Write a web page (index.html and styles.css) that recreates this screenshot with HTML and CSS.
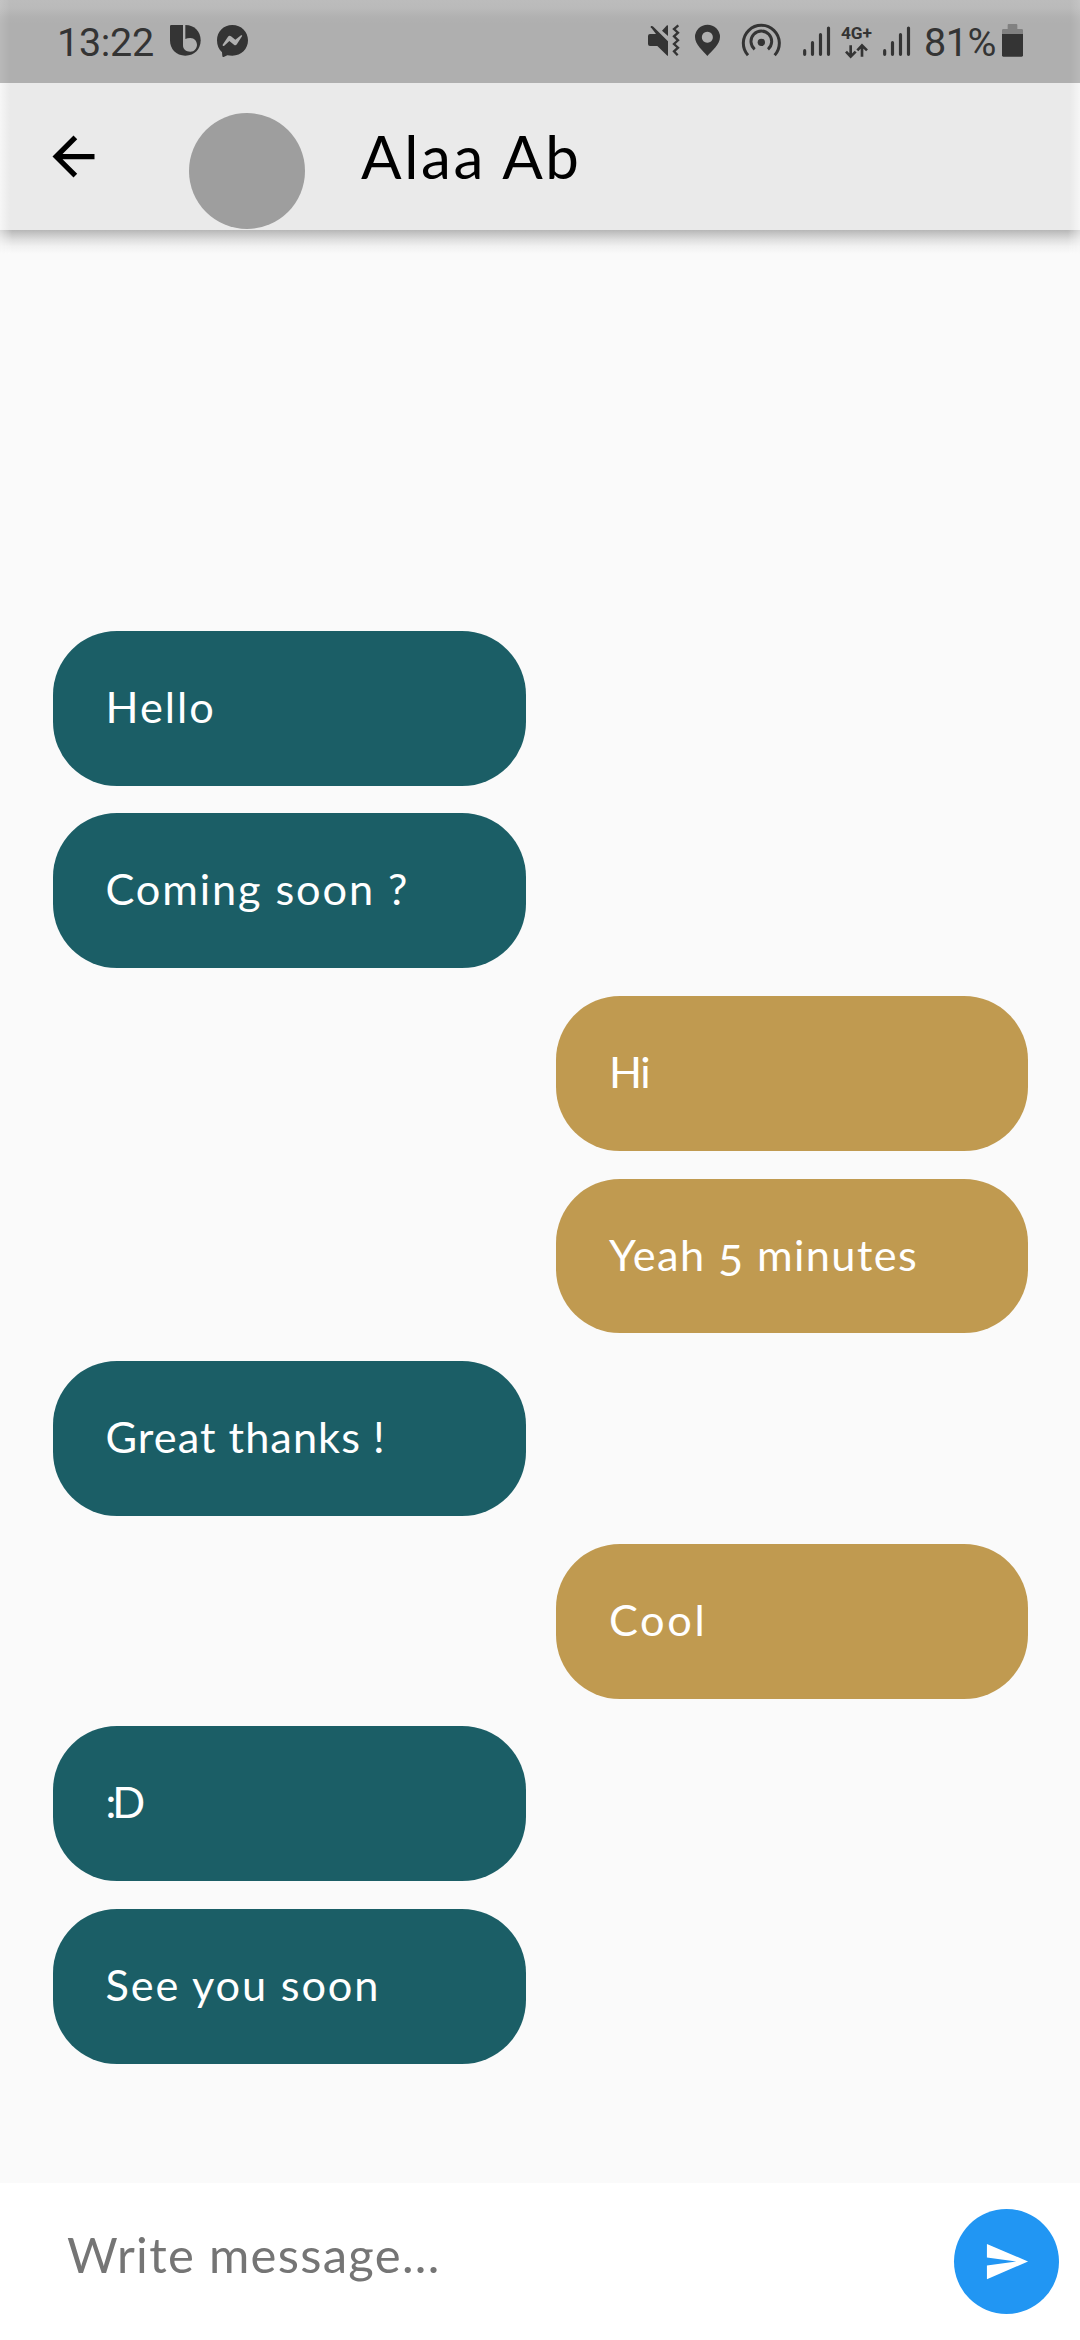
FILE: index.html
```html
<!DOCTYPE html>
<html lang="en">
<head>
<meta charset="utf-8">
<title>Alaa Ab</title>
<link rel="stylesheet" href="styles.css">
</head>
<body>
<div class="screen">
  <div class="top">
    <div class="status">
      <span class="clock">13:22</span>
      <svg class="icon bixby" viewBox="507 0 99 249"><path d="M514 75H556C584 75 602 95 602 121S584 167 556 167 510 147 510 121V79Q510 75 514 75Z"/><path class="cut" d="M549 75H556V117Q562 114 571 114C583 114 591 124 591 134S583 155 571 155C558 155 549 148 549 136Z"/></svg>
      <svg class="icon messenger" viewBox="648 0 99 249"><path d="M697 75C724 75 744 95 744 121S724 167 697 167Q688 167 682 166L671 171Q667 172 667 168L666 157C656 148 651 136 651 121 651 95 670 75 697 75Z"/><path class="cut" d="M668 134L684 110Q688 105 693 109L706 119 723 106Q728 104 726 109L711 132Q707 138 702 134L688 123 672 138Q667 139 668 134Z"/></svg>
      <svg class="icon mute" viewBox="84 0 96 249"><path d="M90 102H108L95 85Q89 81 94 78 97 77 100 80L144 124V167H142L112 138H90Q84 138 84 132V108Q84 102 90 102ZM126 92L141 76Q144 75 144 78V108Z"/><path class="line" d="M175 76L162 87 174 98 162 109 174 121 162 132 174 143 162 154 173 166"/></svg>
      <svg class="icon pin" viewBox="222 0 81 249"><path fill-rule="evenodd" d="M262 168C250 153 225 134 225 111A37.500 37 0 0 1 300 111C300 134 275 153 262 168ZM262 95A16.500 16.500 0 1 0 262.100 95Z"/></svg>
      <svg class="icon hotspot" viewBox="363 0 123 249"><circle cx="424" cy="127" r="11"/><path class="ring" d="M404 148A31 31 0 1 1 444 148M384 166A54 54 0 1 1 464 166"/></svg>
      <svg class="icon bars" viewBox="546 0 87 249"><path class="bar" d="M554 152V163M577.500 128V163M601.500 104V163M625.500 84V163"/></svg>
      <svg class="icon net" viewBox="0 0 99 249"><text class="net-text" x="3" y="118" textLength="93">4G+</text><path class="arrow" d="M32 136V170M18 155L32 170 47 155M66 170V136M52 151L66 136 81 151"/></svg>
      <svg class="icon bars2" viewBox="546 0 87 249"><path class="bar" d="M554 152V163M577.500 128V163M601.500 104V163M625.500 84V163"/></svg>
      <span class="percent">81%</span>
      <svg class="icon" viewBox="483 0 69 249"><path class="empty" d="M503 75Q503 72 506 72H529Q532 72 532 75V87H545Q549 87 549 91V102H486V91Q486 87 490 87H503Z"/><path d="M486 102H549V166Q549 170 545 170H490Q486 170 486 166Z"/></svg>
    </div>
    <header class="header">
      <svg class="back" viewBox="0 0 24 24"><path d="M20 11H7.830l5.590-5.590L12 4l-8 8 8 8 1.410-1.410L7.830 13H20z"/></svg>
      <div class="avatar"></div>
      <h1 class="name">Alaa Ab</h1>
    </header>
  </div>
  <main class="chat">
    <div class="bubble in hello">Hello</div>
    <div class="bubble in coming">Coming soon ?</div>
    <div class="bubble out hi">Hi</div>
    <div class="bubble out yeah">Yeah <span class="oldstyle">5</span> minutes</div>
    <div class="bubble in great">Great thanks !</div>
    <div class="bubble out cool">Cool</div>
    <div class="bubble in smile">:D</div>
    <div class="bubble in see">See you soon</div>
  </main>
  <footer class="composer">
    <span class="placeholder">Write message...</span>
    <div class="send"><svg viewBox="0 0 24 24"><path d="M2.010 21L23 12 2.010 3 2 10l15 2-15 2z"/></svg></div>
  </footer>
</div>
</body>
</html>
```
FILE: styles.css
```css
* { box-sizing: border-box; }
body { margin: 0; background: #fafafa; font-family: Lato, "Open Sans", sans-serif; }
.screen { width: 1080px; height: 2340px; display: flex; flex-direction: column; overflow: hidden; }

.top { position: relative; height: 230px; flex: none; background: #eaeaea; }
.top::before {
  content: ""; position: absolute; inset: 0; pointer-events: none;
  background:
    linear-gradient(to right, rgba(255,255,255,.6), rgba(255,255,255,0) 10px) 0 83px / 100% 147px no-repeat,
    linear-gradient(to left, rgba(255,255,255,.6), rgba(255,255,255,0) 10px) 0 83px / 100% 147px no-repeat;
}
.top::after {
  content: ""; position: absolute; left: 0; right: 0; top: 230px; height: 24px;
  background: linear-gradient(#b6b6b6, #c6c6c6 15%, #dedede 40%, #f1f1f1 68%, #fafafa);
  -webkit-mask-image: linear-gradient(to right, rgba(0,0,0,.45), #000 12px, #000 1068px, rgba(0,0,0,.45));
  mask-image: linear-gradient(to right, rgba(0,0,0,.45), #000 12px, #000 1068px, rgba(0,0,0,.45));
}

.status {
  height: 83px; display: flex; align-items: center; padding: 0 56px 0 57px;
  background:
    linear-gradient(to right, rgba(255,255,255,.12), rgba(255,255,255,0) 10px),
    linear-gradient(to left, rgba(255,255,255,.12), rgba(255,255,255,0) 10px),
    linear-gradient(#bcbcbc, #bababa 8px, #b1b1b1 17px, #afafaf 24px);
  font: 39.5px/83px Roboto, sans-serif; color: #343434;
}
.clock { width: 112px; padding-top: 1px; letter-spacing: -.3px; }
.percent { width: 77px; margin-left: 13px; padding-top: 1px; letter-spacing: -.5px; white-space: nowrap; }
.icon { height: 83px; flex: none; fill: #343434; }
.cut { fill: #b0b0b0; }
.empty { fill: #818181; }
.line { fill: none; stroke: #343434; stroke-width: 7; }
.ring { fill: none; stroke: #343434; stroke-width: 9; }
.bar { stroke: #343434; stroke-width: 9.5; stroke-linecap: round; }
.arrow { fill: none; stroke: #343434; stroke-width: 8; }
.net-text { font: 700 52px Roboto, sans-serif; }
.messenger { margin-left: 14px; }
.mute { margin-left: auto; }
.pin { margin-left: 14px; }
.hotspot, .bars { margin-left: 20px; }
.net, .bars2 { margin-left: 9px; }

.header { height: 147px; display: flex; align-items: center; padding-left: 42px; }
.back { width: 63px; height: 63px; }
.avatar { width: 116px; height: 116px; margin: 28px 0 0 84px; border-radius: 50%; background: #9e9e9e; }
.name { margin: 0 0 1px 56px; font-size: 60px; font-weight: 400; line-height: 72px; letter-spacing: 2.7px; color: #000; }

.chat { flex: 1; display: flex; flex-direction: column; gap: 27.7px; padding: 400.8px 52px 0 53px; }
.bubble {
  flex: none; width: 472.5px; height: 154.9px; padding: 0 0 4px 52.5px; border-radius: 64px;
  display: block; font-size: 43.3px; line-height: 151px; color: #fff; white-space: nowrap;
}
.in { background: #1b5e66; }
.out { align-self: flex-end; background: #c09a50; padding-left: 53.5px; }
.hello { letter-spacing: 2px; }
.coming { letter-spacing: 1.88px; }
.hi { letter-spacing: -1.5px; }
.yeah { letter-spacing: 1.41px; }
.great { letter-spacing: 1.04px; }
.cool { letter-spacing: 2.6px; }
.smile { letter-spacing: -4px; }
.see { letter-spacing: 1.85px; }
.oldstyle { vertical-align: -5px; line-height: 0; }

.composer { height: 157px; flex: none; display: flex; align-items: center; justify-content: space-between; padding: 0 21px 0 67px; background: #fff; }
.placeholder { padding-bottom: 16px; font-size: 49px; letter-spacing: 1.3px; color: #757575; }
.send { width: 105px; height: 105px; border-radius: 50%; display: grid; place-items: center; background: #2196f3; }
.send svg { width: 47px; height: 47px; fill: #fff; }
```
